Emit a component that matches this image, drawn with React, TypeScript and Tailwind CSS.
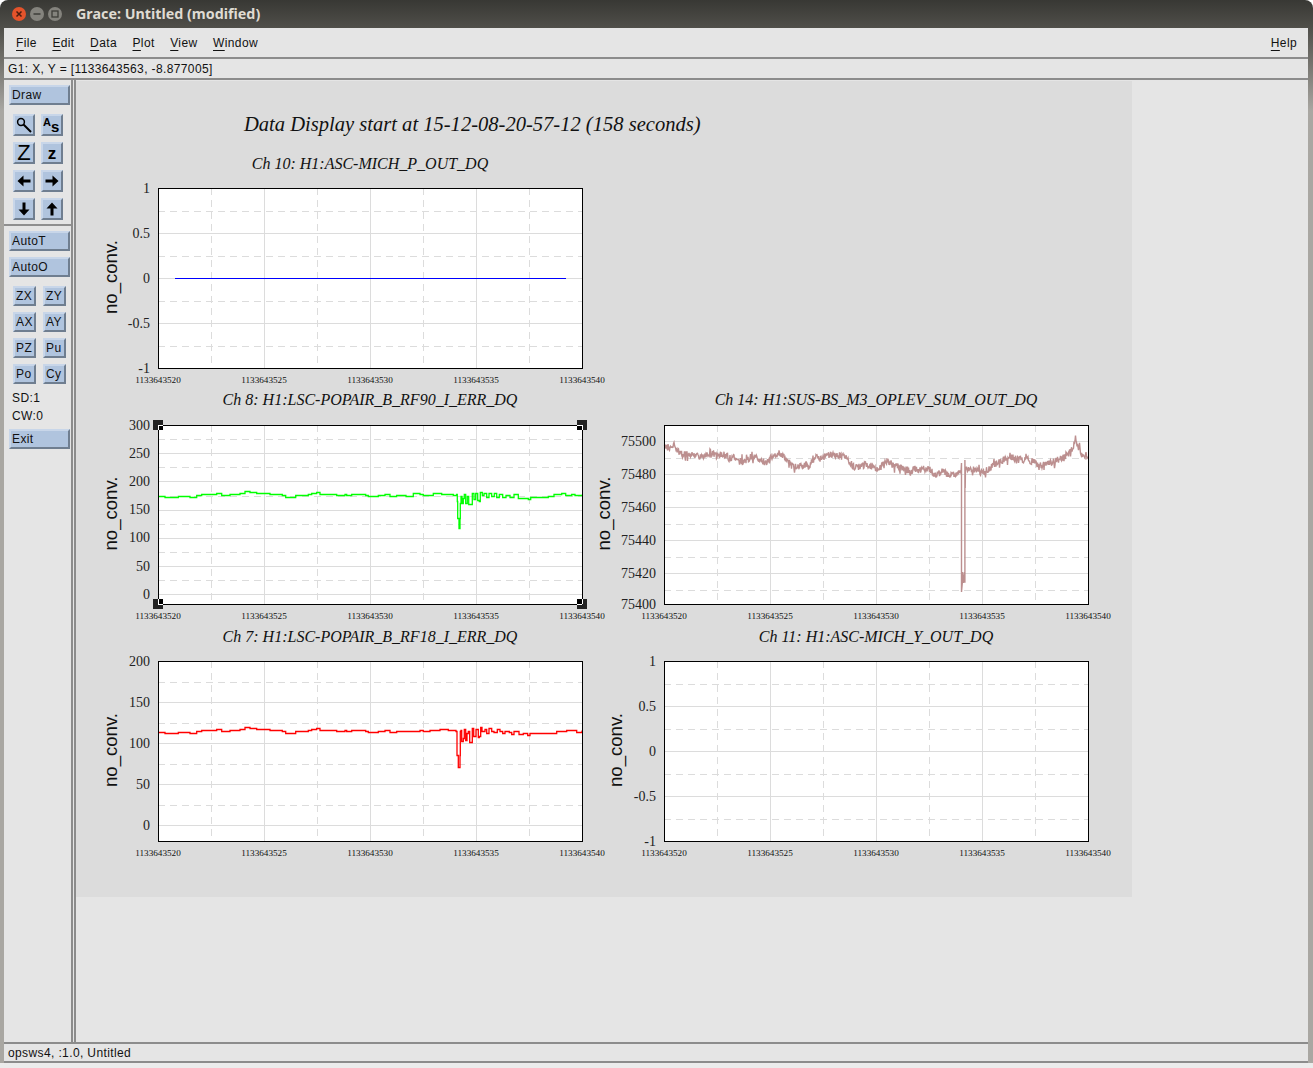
import type { ReactNode } from "react";

const SANS = "font-['Liberation_Sans',Arial,sans-serif]";
const SERIF = "'Liberation Serif', 'Times New Roman', serif";

const XTICKS = ["1133643520", "1133643525", "1133643530", "1133643535", "1133643540"];

type Plot = {
    x: number;
    top: number;
    bottom: number;
    title: string;
    titleY: number;
    labelX: number;
    labelRight: number;
    ticks: { y: number; label: string }[];
};

const unit = ["1", "0.5", "0", "-0.5", "-1"];

const plots: Plot[] = [
    {
        x: 158, top: 188, bottom: 368, title: "Ch 10: H1:ASC-MICH_P_OUT_DQ", titleY: 169, labelX: 111, labelRight: 150,
        ticks: unit.map((label, i) => ({ label, y: 188 + i * 45 })),
    },
    {
        x: 158, top: 425, bottom: 604, title: "Ch 8: H1:LSC-POPAIR_B_RF90_I_ERR_DQ", titleY: 405, labelX: 111, labelRight: 150,
        ticks: ["300", "250", "200", "150", "100", "50", "0"].map((label, i) => ({ label, y: 425 + i * 28.2 })),
    },
    {
        x: 664, top: 425, bottom: 604, title: "Ch 14: H1:SUS-BS_M3_OPLEV_SUM_OUT_DQ", titleY: 405, labelX: 604, labelRight: 656,
        ticks: ["75500", "75480", "75460", "75440", "75420", "75400"].map((label, i) => ({ label, y: i === 5 ? 604 : 441 + i * 33 })),
    },
    {
        x: 158, top: 661, bottom: 841, title: "Ch 7: H1:LSC-POPAIR_B_RF18_I_ERR_DQ", titleY: 642, labelX: 111, labelRight: 150,
        ticks: ["200", "150", "100", "50", "0"].map((label, i) => ({ label, y: 661 + i * 41 })),
    },
    {
        x: 664, top: 661, bottom: 841, title: "Ch 11: H1:ASC-MICH_Y_OUT_DQ", titleY: 642, labelX: 616, labelRight: 656,
        ticks: unit.map((label, i) => ({ label, y: 661 + i * 45 })),
    },
];

// small repeatable noise so the trace looks the same on every load
function noise(seed: number) {
    let s = seed;
    return () => {
        s = (s * 1664525 + 1013904223) % 4294967296;
        return s / 4294967296;
    };
}

// the traces below were read off 3x crops, so [x, y] is relative to a crop origin
function fromCrop(pts: number[][], ox: number, oy: number) {
    return pts.map(([x, y]) => [x / 3 + ox, y / 3 + oy]);
}

const lscLeft = fromCrop(
    [
        [12, 48], [30, 51], [65, 50], [70, 48], [95, 49], [105, 52], [115, 50], [125, 45], [140, 41], [150, 43], [165, 41], [185, 40], [200, 45], [220, 45],
        [225, 43], [240, 42], [255, 38], [270, 34], [285, 35], [305, 40], [345, 41], [350, 43], [360, 41], [382, 44], [392, 51], [415, 52], [422, 46], [450, 45],
        [460, 42], [470, 38], [485, 37], [495, 42], [515, 43], [525, 41], [540, 41], [545, 44], [570, 42], [575, 44], [590, 41], [610, 41], [620, 43], [632, 45],
        [640, 48], [660, 48], [670, 44], [690, 43], [705, 48], [720, 48], [725, 46], [735, 46],
    ],
    155,
    480,
);

const greenRight = fromCrop(
    [
        [0, 75], [18, 78], [40, 70], [60, 71], [70, 76], [88, 74], [100, 70], [125, 72], [140, 71], [160, 75], [170, 73], [172, 92], [173, 145], [176, 145],
        [177, 175], [179, 175], [180, 145], [181, 100], [183, 78], [186, 100], [190, 85], [193, 72], [197, 100], [202, 78], [206, 102], [212, 102], [217, 70],
        [222, 88], [227, 70], [233, 90], [238, 92], [241, 65], [247, 75], [252, 68], [260, 80], [267, 70], [275, 78], [283, 70], [290, 80], [298, 72], [308, 82],
        [318, 75], [330, 80], [342, 73], [355, 85], [370, 84], [385, 88], [392, 81], [420, 80], [445, 78], [462, 72], [485, 70], [497, 75], [515, 72], [525, 75],
        [547, 73],
    ],
    400,
    470,
);

const redRight = fromCrop(
    [
        [0, 90], [10, 93], [30, 89], [60, 87], [85, 90], [108, 92], [111, 165], [114, 165], [115, 200], [119, 200], [120, 165], [121, 92], [123, 90], [125, 123],
        [130, 115], [133, 87], [137, 120], [141, 100], [145, 92], [149, 127], [153, 127], [157, 85], [161, 107], [168, 88], [175, 110], [178, 107], [182, 80],
        [186, 93], [195, 88], [200, 100], [207, 83], [215, 93], [222, 97], [232, 87], [240, 93], [248, 100], [255, 92], [268, 95], [275, 102], [282, 92], [290, 93],
        [297, 103], [310, 100], [323, 105], [330, 98], [360, 98], [410, 92], [440, 90], [470, 95], [486, 92],
    ],
    420,
    700,
);

function stepped(pts: number[][]) {
    let prev = Math.round(pts[0][1]) + 0.5;
    const out: string[] = [];
    for (const [x, y] of pts) {
        const ry = Math.round(y) + 0.5;
        out.push(`${x.toFixed(1)},${prev}`, `${x.toFixed(1)},${ry}`);
        prev = ry;
    }
    return out.join(" ");
}

const greenPoints = stepped([...lscLeft, ...greenRight]);
const redLeft = lscLeft.filter(([x]) => x < 400).map(([x, y]) => [x, 731 + (y - 495) * 1.05]);
const redMid: number[][] = [[405, 731], [420, 730]];
const redPoints = stepped([...redLeft, ...redMid, ...redRight.filter(([x]) => x <= 582), [582, 730]]);

const brownShape = [
    ...fromCrop(
        [
            [14, 35], [25, 38], [40, 30], [55, 50], [70, 60], [90, 55], [110, 62], [135, 62], [155, 53], [170, 63], [190, 58], [205, 70], [225, 65], [240, 80],
            [265, 72], [280, 62], [300, 70], [318, 85], [335, 65], [355, 55], [370, 62], [395, 92], [420, 90], [445, 97], [462, 65], [480, 72], [510, 58], [540, 62],
            [560, 70], [580, 95], [600, 97], [620, 88], [655, 102], [680, 80], [700, 92], [730, 98],
        ],
        660,
        435,
    ),
    ...fromCrop(
        [
            [0, 140], [30, 155], [60, 150], [85, 145], [105, 165], [125, 155], [150, 165], [170, 160], [183, 150], [195, 150], [225, 150], [245, 160], [275, 140],
            [300, 125], [320, 115], [330, 105], [350, 120], [375, 118], [405, 125], [415, 140], [445, 130], [465, 125], [490, 110], [510, 95], [528, 65], [540, 90],
            [545, 110], [565, 105],
        ],
        900,
        420,
    ),
];

function lerp(pts: number[][], x: number) {
    for (let i = 1; i < pts.length; i++) {
        if (x <= pts[i][0]) {
            const [x0, y0] = pts[i - 1];
            const [x1, y1] = pts[i];
            return y0 + ((y1 - y0) * (x - x0)) / (x1 - x0);
        }
    }
    return pts[pts.length - 1][1];
}

function brownTrace() {
    const rnd = noise(77);
    const out: string[] = [];
    for (let x = 664.5; x <= 1088; x += 0.5) {
        if (x > 961 && x < 965.5) continue;
        const kick = rnd() > 0.93 ? 4 : 0;
        const y = lerp(brownShape, x) + (rnd() - 0.5) * 7 + (rnd() > 0.5 ? kick : -kick);
        out.push(`${x.toFixed(1)},${y.toFixed(1)}`);
        if (x === 961) {
            out.push("961.5,463", "961.5,592", "962.3,583", "962.3,572", "963.2,583", "964.3,572", "964.3,582", "964.9,582", "964.9,460", "965.2,488");
        }
    }
    return out.join(" ");
}

function PlotFrame({ plot }: { plot: Plot }) {
    const { x, top, bottom } = plot;
    const right = x + 424;
    const majors = plot.ticks.map((t) => t.y).filter((y) => y > top && y < bottom);
    const gap = plot.ticks[1].y - plot.ticks[0].y;
    const minors: number[] = [];
    for (const t of plot.ticks) {
        if (t.y + gap / 2 < bottom) minors.push(t.y + gap / 2);
    }
    if (plot.ticks[0].y - gap / 2 > top) minors.push(plot.ticks[0].y - gap / 2);

    return (
        <g>
            <rect x={x} y={top} width={424} height={bottom - top} fill="#ffffff" />
            <g shapeRendering="crispEdges" stroke="#dcdcdc" strokeWidth={1}>
                {[106, 212, 318].map((dx) => (
                    <line key={dx} x1={x + dx + 0.5} x2={x + dx + 0.5} y1={top} y2={bottom} />
                ))}
                {[53, 159, 265, 371].map((dx) => (
                    <line key={dx} x1={x + dx + 0.5} x2={x + dx + 0.5} y1={top} y2={bottom} strokeDasharray="7 5" />
                ))}
                {majors.map((y) => (
                    <line key={y} x1={x} x2={right} y1={Math.round(y) + 0.5} y2={Math.round(y) + 0.5} />
                ))}
                {minors.map((y) => (
                    <line key={y} x1={x} x2={right} y1={Math.round(y) + 0.5} y2={Math.round(y) + 0.5} strokeDasharray="7 5" />
                ))}
            </g>
            <text x={x + 212} y={plot.titleY} textAnchor="middle" fontFamily={SERIF} fontStyle="italic" fontSize={16} fill="#111">
                {plot.title}
            </text>
            {plot.ticks.map((t) => (
                <text key={t.label} x={plot.labelRight} y={t.y + 4.5} textAnchor="end" fontFamily={SERIF} fontSize={14} fill="#222">
                    {t.label}
                </text>
            ))}
            {XTICKS.map((label, i) => (
                <text key={label} x={x + i * 106} y={bottom + 15} textAnchor="middle" fontFamily={SERIF} fontSize={9.2} fill="#111">
                    {label}
                </text>
            ))}
            <text
                transform={`translate(${plot.labelX + 6} ${(top + bottom) / 2 - 1}) rotate(-90)`}
                textAnchor="middle"
                fontFamily="'Liberation Sans', Arial, sans-serif"
                fontSize={18.6}
                fill="#111"
            >
                no_conv.
            </text>
        </g>
    );
}

function FrameOutline({ plot }: { plot: Plot }) {
    return (
        <rect
            x={plot.x + 0.5}
            y={plot.top + 0.5}
            width={424}
            height={plot.bottom - plot.top}
            fill="none"
            stroke="#000"
            strokeWidth={1}
            shapeRendering="crispEdges"
        />
    );
}

function Handle({ cx, cy, sx, sy }: { cx: number; cy: number; sx: number; sy: number }) {
    return (
        <g shapeRendering="crispEdges">
            <rect x={cx - 5} y={cy - 5} width={10} height={10} fill="#222" />
            <rect x={sx > 0 ? cx : cx - 5} y={sy > 0 ? cy : cy - 5} width={5} height={5} fill="#000" />
            <rect x={cx} y={sy > 0 ? cy : cy - 5} width={1} height={5} fill="#fff" />
            <rect x={sx > 0 ? cx : cx - 5} y={cy} width={5} height={1} fill="#fff" />
        </g>
    );
}

function GraphPage() {
    return (
        <div className="w-[1056px] h-[816px] bg-[#dcdcdc] shrink-0">
            <svg viewBox="76 81 1056 816" width={1056} height={816} className="block">
                <text x={244} y={131} fontFamily={SERIF} fontStyle="italic" fontSize={20.55} fill="#111">
                    Data Display start at 15-12-08-20-57-12 (158 seconds)
                </text>
                {plots.map((p) => (
                    <PlotFrame key={p.title} plot={p} />
                ))}
                <line x1={175} x2={566} y1={278.5} y2={278.5} stroke="#0000ff" strokeWidth={1} shapeRendering="crispEdges" />
                <polyline points={greenPoints} fill="none" stroke="#00ff00" strokeWidth={1.3} />
                <polyline points={brownTrace()} fill="none" stroke="#bc8f8f" strokeWidth={1.4} />
                <polyline points={redPoints} fill="none" stroke="#ff0000" strokeWidth={1.3} />
                {plots.map((p) => (
                    <FrameOutline key={p.title} plot={p} />
                ))}
                <Handle cx={158} cy={425} sx={1} sy={1} />
                <Handle cx={582} cy={425} sx={-1} sy={1} />
                <Handle cx={158} cy={604} sx={1} sy={-1} />
                <Handle cx={582} cy={604} sx={-1} sy={-1} />
            </svg>
        </div>
    );
}

const bevel =
    "bg-[#b0c4de] border-2 border-solid border-t-[#c8d6e9] border-l-[#c8d6e9] border-b-[#6f7e90] border-r-[#6f7e90] text-[12px] leading-none tracking-[0.38px] text-[#111] flex items-center";

function WideButton({ label }: { label: string }) {
    return <div className={`${bevel} w-[61px] h-[20px] pl-[1px] ml-[5px]`}>{label}</div>;
}

function SmallButton({ label }: { label: string }) {
    return <div className={`${bevel} w-[23px] h-[20px] pl-[1px] overflow-hidden`}>{label}</div>;
}

function IconButton({ children }: { children: ReactNode }) {
    return <div className={`${bevel} w-[22px] h-[22px] justify-center`}>{children}</div>;
}

function Arrow({ rotate }: { rotate: number }) {
    return (
        <svg viewBox="0 0 16 16" width={16} height={16} style={{ transform: `rotate(${rotate}deg)` }}>
            <path d="M1.5 8 L7.5 2.5 V6.5 H14.5 V9.5 H7.5 V13.5 Z" fill="#000" />
        </svg>
    );
}

function SidePanel() {
    return (
        <div className="w-[69px] shrink-0 flex flex-col pt-[5px] border-r-2 border-[#8c8c8c]">
            <WideButton label="Draw" />
            <div className="grid grid-cols-[22px_22px] gap-x-[6px] gap-y-[6px] ml-[9px] mt-[9px]">
                <IconButton>
                    <svg viewBox="0 0 18 18" width={18} height={18}>
                        <circle cx="6" cy="6" r="3.4" fill="none" stroke="#000" strokeWidth="1.5" />
                        <path d="M8.5 8.5 L16 16" stroke="#000" strokeWidth="2" />
                    </svg>
                </IconButton>
                <IconButton>
                    <span className="relative w-[18px] h-[18px] font-bold text-black tracking-normal">
                        <span className="absolute left-0 top-[1px] text-[11px]">A</span>
                        <span className="absolute left-[8px] top-[3px] text-[15px]">s</span>
                    </span>
                </IconButton>
                <IconButton>
                    <span className="text-[22px] font-normal text-black tracking-normal">Z</span>
                </IconButton>
                <IconButton>
                    <span className="text-[17px] font-bold text-black tracking-normal">z</span>
                </IconButton>
                <IconButton>
                    <Arrow rotate={0} />
                </IconButton>
                <IconButton>
                    <Arrow rotate={180} />
                </IconButton>
                <IconButton>
                    <Arrow rotate={-90} />
                </IconButton>
                <IconButton>
                    <Arrow rotate={90} />
                </IconButton>
            </div>
            <div className="h-[2px] bg-[#8f8f8f] mt-[4px] mb-[5px]" />
            <WideButton label="AutoT" />
            <div className="h-[6px]" />
            <WideButton label="AutoO" />
            <div className="grid grid-cols-[23px_23px] gap-x-[7px] gap-y-[6px] ml-[9px] mt-[9px]">
                {["ZX", "ZY", "AX", "AY", "PZ", "Pu", "Po", "Cy"].map((label) => (
                    <SmallButton key={label} label={label} />
                ))}
            </div>
            <div className="text-[12px] leading-[18px] tracking-[0.38px] text-[#111] pl-[8px] mt-[5px]">SD:1</div>
            <div className="text-[12px] leading-[18px] tracking-[0.38px] text-[#111] pl-[8px]">CW:0</div>
            <div className="h-[4px]" />
            <WideButton label="Exit" />
        </div>
    );
}

function MenuItem({ label }: { label: string }) {
    return (
        <span>
            <span className="underline underline-offset-[3px]">{label[0]}</span>
            {label.slice(1)}
        </span>
    );
}

function TitleBar() {
    return (
        <div className="h-[28px] shrink-0 flex items-center rounded-t-[8px] bg-gradient-to-b from-[#383834] to-[#504f4a]">
            <div className="flex items-center gap-[4px] pl-[12px] w-[76px] shrink-0">
                <svg viewBox="0 0 14 14" width={14} height={14}>
                    <circle cx="7" cy="7" r="7" fill="#e4532b" />
                    <path d="M4.5 4.5 L9.5 9.5 M9.5 4.5 L4.5 9.5" stroke="#4a1d10" strokeWidth="1.5" />
                </svg>
                <svg viewBox="0 0 14 14" width={14} height={14}>
                    <circle cx="7" cy="7" r="7" fill="#84837d" />
                    <path d="M3.5 7 H10.5" stroke="#3d3c38" strokeWidth="1.5" />
                </svg>
                <svg viewBox="0 0 14 14" width={14} height={14}>
                    <circle cx="7" cy="7" r="7" fill="#84837d" />
                    <rect x="4" y="4" width="6" height="6" fill="none" stroke="#3d3c38" strokeWidth="1.3" />
                </svg>
            </div>
            <span className="font-['Noto_Sans',sans-serif] font-bold text-[14.3px] text-[#dfdbd2] pb-[1px]">Grace: Untitled (modified)</span>
        </div>
    );
}

export default function App() {
    return (
        <div className={`w-[1313px] h-[1068px] overflow-hidden flex flex-col bg-white ${SANS}`}>
            <TitleBar />
            <div className="flex-1 min-h-0 flex flex-col pl-[4px] pr-[5px] bg-gradient-to-b from-[#504f4a] via-[#a9a7a2] via-[8%] to-[#a9a7a2]">
                <div className="h-[29px] shrink-0 bg-[#e5e5e5] flex items-center justify-between pl-[12px] pr-[11px] text-[12px] tracking-[0.38px] text-[#111]">
                    <div className="flex gap-[15.5px]">
                        {["File", "Edit", "Data", "Plot", "View", "Window"].map((m) => (
                            <MenuItem key={m} label={m} />
                        ))}
                    </div>
                    <MenuItem label="Help" />
                </div>
                <div className="h-[23px] shrink-0 bg-[#e5e5e5] border-y-2 border-[#8c8c8c] flex items-center pl-[4px] text-[12px] tracking-[0.38px] text-[#111]">
                    G1: X, Y = [1133643563, -8.877005]
                </div>
                <div className="flex-1 min-h-0 flex bg-[#e5e5e5]">
                    <SidePanel />
                    <div className="flex-1 min-w-0 ml-[1px] border-l-2 border-[#8c8c8c] pt-[1px] bg-[#e5e5e5] overflow-hidden">
                        <GraphPage />
                    </div>
                </div>
                <div className="h-[21px] shrink-0 bg-[#e5e5e5] border-y-2 border-[#8c8c8c] flex items-center pl-[4px] text-[12px] tracking-[0.38px] text-[#111]">
                    opsws4, :1.0, Untitled
                </div>
            </div>
            <div className="h-[5px] shrink-0 bg-[#ececec]" />
        </div>
    );
}
